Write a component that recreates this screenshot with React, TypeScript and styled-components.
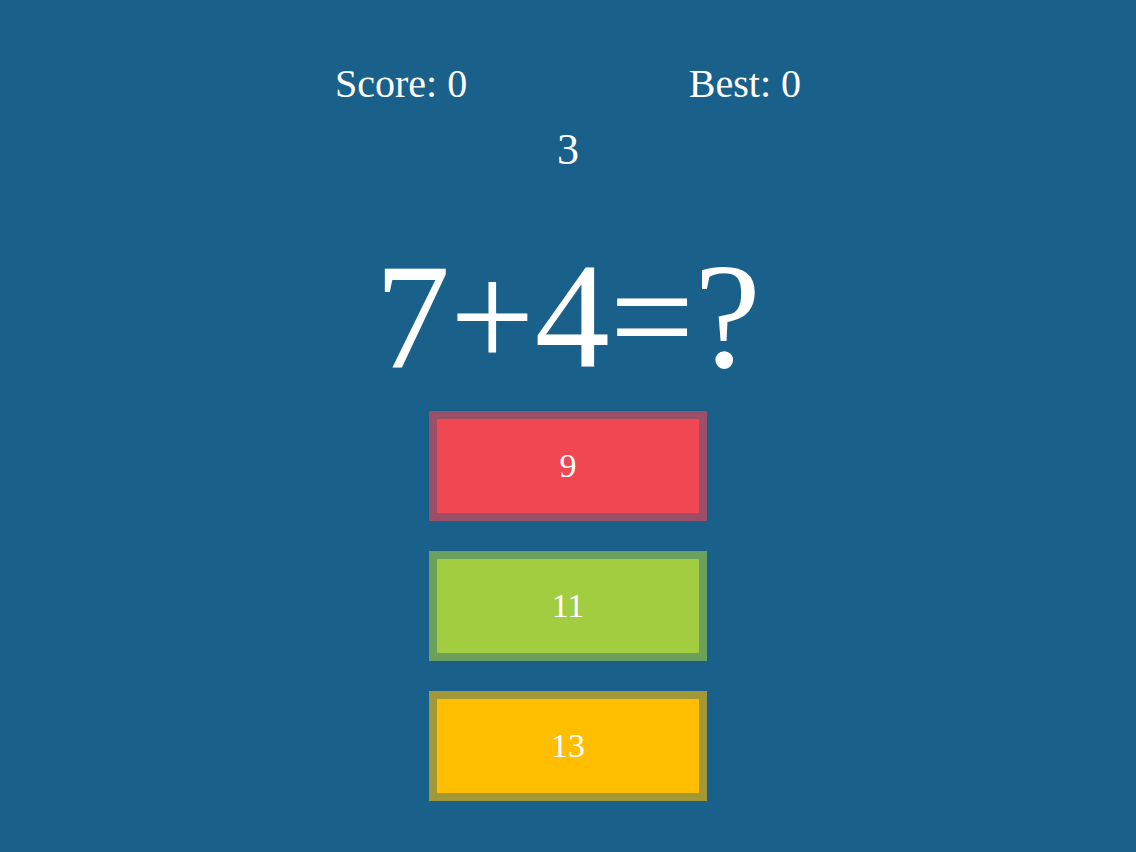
import React from "react";
import styled, { createGlobalStyle } from "styled-components";

const Global = createGlobalStyle`
  html, body {
    margin: 0;
    padding: 0;
    background: #19608a;
  }
  body {
    font-family: "Liberation Serif", "Times New Roman", serif;
    color: #ffffff;
  }
`;

const Page = styled.div`
  min-height: 852px;
  background: #19608a;
  display: flex;
  flex-direction: column;
  align-items: center;
`;

const ScoreRow = styled.div`
  margin-top: 64px;
  width: 466px;
  display: flex;
  justify-content: space-between;
  font-size: 40px;
  line-height: 40px;
`;

const Timer = styled.div`
  margin-top: 24px;
  font-size: 44px;
  line-height: 44px;
`;

const Question = styled.div`
  margin-top: 69px;
  font-size: 150px;
  line-height: 150px;
`;

const Answers = styled.div`
  margin-top: 20px;
  display: flex;
  flex-direction: column;
  gap: 30px;
`;

const Answer = styled.button<{ $bg: string }>`
  width: 278px;
  height: 110px;
  box-sizing: border-box;
  border: 8px solid rgba(25, 96, 138, 0.4);
  background: ${(p) => p.$bg};
  color: #ffffff;
  font-family: "Liberation Serif", "Times New Roman", serif;
  font-size: 34px;
  padding: 0;
  margin: 0;
  display: flex;
  align-items: center;
  justify-content: center;
  cursor: pointer;
`;

export default function App() {
  const answers = [
    { value: 9, color: "#f04752" },
    { value: 11, color: "#a2cd40" },
    { value: 13, color: "#ffbe00" },
  ];
  return (
    <>
      <Global />
      <Page>
        <ScoreRow>
          <span>Score: 0</span>
          <span>Best: 0</span>
        </ScoreRow>
        <Timer>3</Timer>
        <Question>7+4=?</Question>
        <Answers>
          {answers.map((a) => (
            <Answer key={a.value} $bg={a.color}>
              {a.value}
            </Answer>
          ))}
        </Answers>
      </Page>
    </>
  );
}
